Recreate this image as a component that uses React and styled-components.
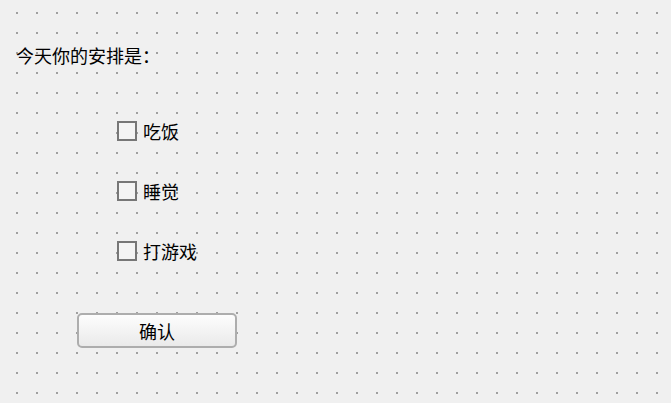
import React, { useState } from "react";
import styled, { createGlobalStyle } from "styled-components";

const GlobalStyle = createGlobalStyle`
  html, body {
    margin: 0;
    padding: 0;
    background: #f0f0f0;
  }
`;

// Designer form with the dotted grid
const Form = styled.div`
  width: 671px;
  height: 403px;
  box-sizing: border-box;
  padding: 40px 0 0 16px;
  display: flex;
  flex-direction: column;
  align-items: flex-start;
  background-color: #a0a0a0;
  background-image: linear-gradient(90deg, #f0f0f0 18px, transparent 18px),
    linear-gradient(#f0f0f0 18px, transparent 18px);
  background-size: 20px 20px;
  background-position: 18px 14px;
  font-family: "Noto Sans CJK SC", "Noto Sans", sans-serif;
  font-size: 18px;
  color: #000;
`;

const Title = styled.div`
  height: 30px;
  line-height: 30px;
  white-space: nowrap;
`;

const Options = styled.div`
  margin-top: 31px;
  padding-left: 101px;
  display: flex;
  flex-direction: column;
`;

const OptionRow = styled.label`
  height: 60px;
  display: flex;
  align-items: center;
  gap: 6px;
  cursor: default;
`;

const Box = styled.span`
  width: 20px;
  height: 20px;
  box-sizing: border-box;
  border: 2px solid #777777;
  background: #f4f4f4;
  display: flex;
  align-items: center;
  justify-content: center;
  font-size: 14px;
  line-height: 1;
`;

const OptionText = styled.span`
  line-height: 20px;
`;

const ConfirmButton = styled.button`
  margin-top: 32px;
  margin-left: 61px;
  width: 160px;
  height: 35px;
  box-sizing: border-box;
  border: 2px solid #adadad;
  border-radius: 5px;
  background: linear-gradient(#fdfdfd, #eaeaea);
  font-family: inherit;
  font-size: 18px;
  color: #000;
  padding: 0;
  display: flex;
  align-items: center;
  justify-content: center;
`;

const items = ["吃饭", "睡觉", "打游戏"];

const App = () => {
  const [checked, setChecked] = useState({});

  return (
    <>
      <GlobalStyle />
      <Form>
        <Title>今天你的安排是：</Title>
        <Options>
          {items.map((name) => (
            <OptionRow
              key={name}
              onClick={() => setChecked({ ...checked, [name]: !checked[name] })}
            >
              <Box>{checked[name] ? "✓" : ""}</Box>
              <OptionText>{name}</OptionText>
            </OptionRow>
          ))}
        </Options>
        <ConfirmButton>确认</ConfirmButton>
      </Form>
    </>
  );
};

export default App;
